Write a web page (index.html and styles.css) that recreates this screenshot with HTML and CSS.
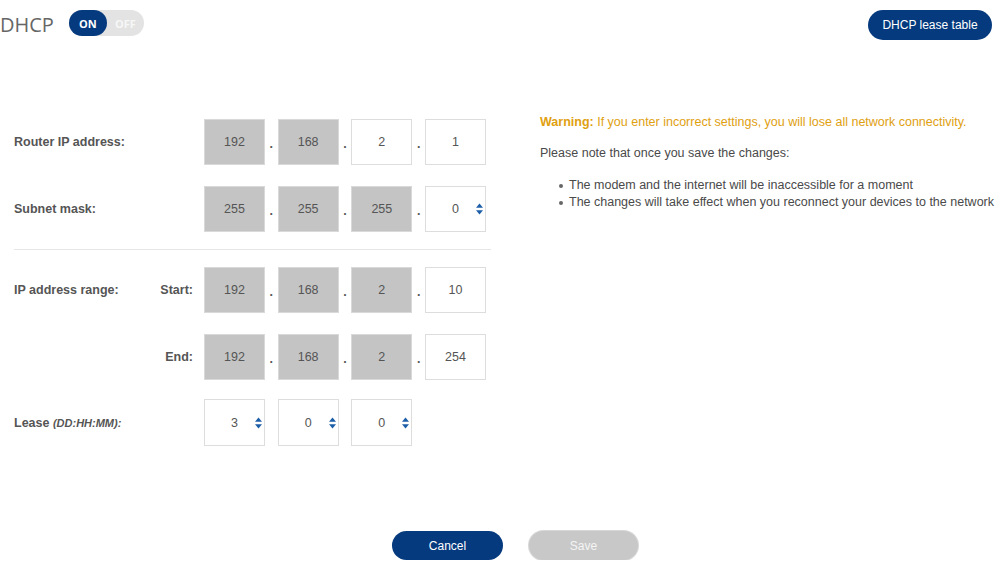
FILE: index.html
```html
<!DOCTYPE html>
<html>
<head>
<meta charset="utf-8">
<link rel="stylesheet" href="styles.css">
</head>
<body>
<header class="top">
  <div class="title-group">
    <h1 class="title">DHCP</h1>
    <div class="toggle">
      <span class="toggle-on">ON</span>
      <span class="toggle-off">OFF</span>
    </div>
  </div>
  <button class="btn btn-primary btn-lease">DHCP lease table</button>
</header>

<main class="content">
  <section class="form">
    <div class="row">
      <div class="label-cell"><span class="label">Router IP address:</span></div>
      <div class="fields">
        <div class="box box-fixed">192</div><span class="dot">.</span>
        <div class="box box-fixed">168</div><span class="dot">.</span>
        <div class="box">2</div><span class="dot">.</span>
        <div class="box">1</div>
      </div>
    </div>
    <div class="row">
      <div class="label-cell"><span class="label">Subnet mask:</span></div>
      <div class="fields">
        <div class="box box-fixed">255</div><span class="dot">.</span>
        <div class="box box-fixed">255</div><span class="dot">.</span>
        <div class="box box-fixed">255</div><span class="dot">.</span>
        <div class="box box-spin"><span class="spin-val">0</span><svg class="spin" viewBox="0 0 7 12" width="7" height="12"><polygon points="3.5,0.5 7,4.8 0,4.8"/><polygon points="0,7.2 7,7.2 3.5,11.5"/></svg></div>
      </div>
    </div>
    <hr class="sep">
    <div class="row row-range">
      <div class="label-cell"><span class="label">IP address range:</span><span class="sublabel">Start:</span></div>
      <div class="fields">
        <div class="box box-fixed">192</div><span class="dot">.</span>
        <div class="box box-fixed">168</div><span class="dot">.</span>
        <div class="box box-fixed">2</div><span class="dot">.</span>
        <div class="box">10</div>
      </div>
    </div>
    <div class="row">
      <div class="label-cell"><span class="label"></span><span class="sublabel">End:</span></div>
      <div class="fields">
        <div class="box box-fixed">192</div><span class="dot">.</span>
        <div class="box box-fixed">168</div><span class="dot">.</span>
        <div class="box box-fixed">2</div><span class="dot">.</span>
        <div class="box">254</div>
      </div>
    </div>
    <div class="row row-lease">
      <div class="label-cell"><span class="label">Lease <em class="hint">(DD:HH:MM):</em></span></div>
      <div class="fields">
        <div class="box box-spin"><span class="spin-val">3</span><svg class="spin" viewBox="0 0 7 12" width="7" height="12"><polygon points="3.5,0.5 7,4.8 0,4.8"/><polygon points="0,7.2 7,7.2 3.5,11.5"/></svg></div><span class="dot"></span>
        <div class="box box-spin"><span class="spin-val">0</span><svg class="spin" viewBox="0 0 7 12" width="7" height="12"><polygon points="3.5,0.5 7,4.8 0,4.8"/><polygon points="0,7.2 7,7.2 3.5,11.5"/></svg></div><span class="dot"></span>
        <div class="box box-spin"><span class="spin-val">0</span><svg class="spin" viewBox="0 0 7 12" width="7" height="12"><polygon points="3.5,0.5 7,4.8 0,4.8"/><polygon points="0,7.2 7,7.2 3.5,11.5"/></svg></div>
      </div>
    </div>
  </section>

  <aside class="info">
    <p class="warning"><strong>Warning:</strong> If you enter incorrect settings, you will lose all network connectivity.</p>
    <p class="note">Please note that once you save the changes:</p>
    <ul class="bullets">
      <li>The modem and the internet will be inaccessible for a moment</li>
      <li>The changes will take effect when you reconnect your devices to the network</li>
    </ul>
  </aside>
</main>

<footer class="actions">
  <button class="btn btn-primary btn-action">Cancel</button>
  <button class="btn btn-disabled btn-action">Save</button>
</footer>
</body>
</html>
```

FILE: styles.css
```css
* { box-sizing: border-box; }

body {
  margin: 0;
  background: #ffffff;
  font-family: "Liberation Sans", Arial, sans-serif;
  font-size: 12.5px;
  color: #555555;
}

.top {
  display: flex;
  justify-content: space-between;
  align-items: flex-start;
  padding: 10px 7px 0 0;
}

.title-group {
  display: flex;
  align-items: flex-start;
  gap: 15px;
}

.title {
  margin: 2px 0 0 0;
  font-family: "Open Sans", sans-serif;
  font-weight: 400;
  font-size: 20px;
  line-height: 26px;
  color: #666666;
}

.toggle {
  display: flex;
  align-items: center;
  width: 75px;
  height: 26px;
  border-radius: 13px;
  background: #e3e3e3;
  font-family: "Open Sans", sans-serif;
  font-weight: 700;
  font-size: 11px;
  color: #ffffff;
}

.toggle-on {
  display: flex;
  align-items: center;
  justify-content: center;
  width: 38px;
  height: 26px;
  border-radius: 13px;
  background: #053a7e;
}

.toggle-off {
  flex: 1;
  text-align: center;
  color: #f7f7f7;
}

.btn {
  border: none;
  font-family: "Liberation Sans", Arial, sans-serif;
  font-size: 12px;
  color: #ffffff;
  cursor: pointer;
  padding: 0;
}

.btn-primary {
  background: #053a7e;
}

.btn-disabled {
  background: #c8c8c8;
  color: #f4f4f4;
  box-shadow: 0 0 0 1px #d8d8d8;
}

.btn-lease {
  width: 124px;
  height: 30px;
  border-radius: 15px;
}

.content {
  display: flex;
  align-items: flex-start;
  margin-top: 73px;
}

.form {
  flex: none;
  width: 491px;
  padding: 6px 0 0 14px;
}

.row {
  display: flex;
  align-items: center;
  height: 46px;
  margin-bottom: 21px;
}

.row-range { margin-bottom: 21px; }

.row-lease {
  height: 47px;
  margin-top: -2px;
  margin-bottom: 0;
}

.sep {
  border: none;
  border-top: 1px solid #e6e6e6;
  margin: -4px 0 17px 0;
  height: 0;
}

.label-cell {
  display: flex;
  justify-content: space-between;
  align-items: center;
  width: 190px;
  padding-right: 11px;
}

.label {
  font-weight: 700;
  color: #555555;
}

.hint {
  font-size: 11px;
  font-style: italic;
}

.sublabel {
  font-weight: 700;
  color: #555555;
}

.fields {
  display: flex;
  align-items: stretch;
  height: 100%;
}

.box {
  display: flex;
  align-items: center;
  justify-content: center;
  width: 61px;
  height: 100%;
  border: 1px solid #dddddd;
  background: #ffffff;
  color: #555555;
}

.box-fixed {
  background: #c4c4c4;
  border-color: #d9d9d9;
}

.box-spin {
  display: grid;
  grid-template-columns: 1fr auto 1fr;
  align-items: center;
}

.spin-val { grid-column: 2; }

.spin {
  grid-column: 3;
  justify-self: end;
  margin-right: 2px;
  fill: #1d5ea8;
}

.dot {
  display: flex;
  align-items: center;
  justify-content: center;
  width: 12.67px;
  font-weight: 700;
  padding-top: 4px;
  color: #555555;
}

.info {
  margin-left: 49px;
  margin-top: 1px;
  line-height: 17px;
  white-space: nowrap;
}

.info p { margin: 0; }

.warning {
  color: #e0a010;
}

.note {
  margin-top: 14px !important;
  color: #4a4a4a;
}

.bullets {
  list-style: none;
  margin: 15px 0 0 0;
  padding-left: 19px;
  color: #4a4a4a;
}

.bullets li {
  display: flex;
  align-items: center;
  gap: 6px;
}

.bullets li::before {
  content: "";
  width: 4px;
  height: 4px;
  border-radius: 50%;
  background: #666666;
  flex: none;
}

.actions {
  display: flex;
  justify-content: center;
  gap: 26px;
  padding-left: 31px;
  margin-top: 85px;
}

.btn-action {
  width: 111px;
  height: 29px;
  border-radius: 15px;
}

.btn-disabled.btn-action { width: 109px; }
```
